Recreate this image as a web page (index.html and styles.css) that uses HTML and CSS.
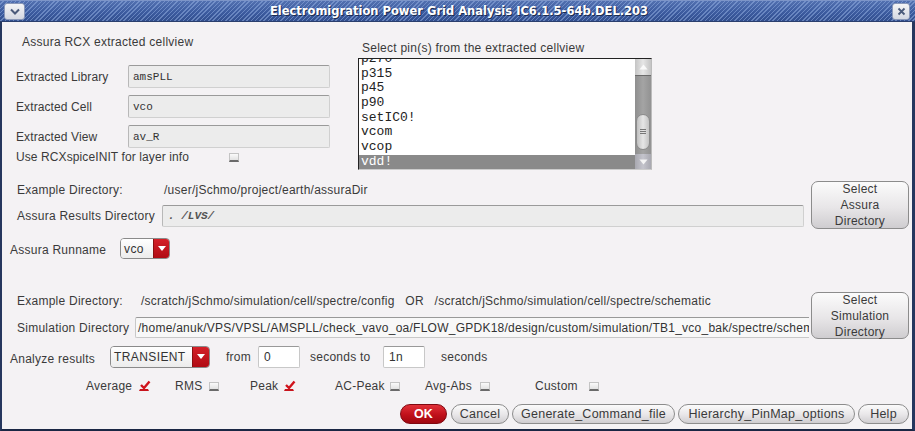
FILE: index.html
```html
<!DOCTYPE html>
<html>
<head>
<meta charset="utf-8">
<link rel="stylesheet" href="styles.css">
</head>
<body>
<div class="window">
  <div class="titlebar">
    <div class="tb-btn tb-menu"><svg width="12" height="8" viewBox="0 0 12 8"><path d="M2 1.5 L6 5.5 L10 1.5" fill="none" stroke="#4a5a7a" stroke-width="2"/></svg></div>
    <div class="tb-title">Electromigration Power Grid Analysis IC6.1.5-64b.DEL.203</div>
    <div class="tb-btn tb-close"><svg width="9" height="9" viewBox="0 0 9 9"><path d="M1.5 1.5 L7.5 7.5 M7.5 1.5 L1.5 7.5" stroke="#4a5a7a" stroke-width="1.8"/></svg></div>
  </div>
  <div class="frame">
    <div class="top">
      <div class="cellview">
        <div class="section-title">Assura RCX extracted cellview</div>
        <div class="fields">
          <div class="field"><span class="flabel">Extracted Library</span><div class="input mono">amsPLL</div></div>
          <div class="field"><span class="flabel">Extracted Cell</span><div class="input mono">vco</div></div>
          <div class="field"><span class="flabel">Extracted View</span><div class="input mono">av_R</div></div>
        </div>
        <div class="checkline"><span class="check-label">Use RCXspiceINIT for layer info</span><span class="cb"></span></div>
      </div>
      <div class="pins">
        <div class="pins-title">Select pin(s) from the extracted cellview</div>
        <div class="listbox">
          <div class="items-clip">
            <ul class="items">
              <li>p270</li>
              <li>p315</li>
              <li>p45</li>
              <li>p90</li>
              <li>setIC0!</li>
              <li>vcom</li>
              <li>vcop</li>
              <li class="sel">vdd!</li>
            </ul>
          </div>
          <div class="scrollbar">
            <div class="sb-up"><svg width="9" height="6" viewBox="0 0 9 6"><path d="M0.5 5.5 L4.5 0.5 L8.5 5.5 Z" fill="#fafafa"/></svg></div>
            <div class="sb-track"><div class="sb-thumb"><span class="grip"></span></div></div>
            <div class="sb-down"><svg width="9" height="6" viewBox="0 0 9 6"><path d="M0.5 0.5 L4.5 5.5 L8.5 0.5 Z" fill="#f4f4f4"/></svg></div>
          </div>
        </div>
      </div>
    </div>

    <div class="dir-section assura">
      <div class="dir-left">
        <div class="ex-row"><span class="ex-label">Example Directory:</span><span class="ex-value">/user/jSchmo/project/earth/assuraDir</span></div>
        <div class="dir-row"><span class="dir-label">Assura Results Directory</span><div class="input wide mono lvs">. /LVS/</div></div>
      </div>
      <div class="btn big">Select<br>Assura<br>Directory</div>
    </div>

    <div class="runname-row">
      <span class="run-label">Assura Runname</span>
      <div class="combo small"><span class="combo-text">vco</span><span class="combo-arrow"><svg width="8" height="5" viewBox="0 0 8 5"><path d="M0 0 L8 0 L4 5 Z" fill="#fff"/></svg></span></div>
    </div>

    <div class="dir-section sim">
      <div class="dir-left">
        <div class="ex-row"><span class="ex-label">Example Directory:</span><span class="ex-value">/scratch/jSchmo/simulation/cell/spectre/config&nbsp;&nbsp;&nbsp;OR&nbsp;&nbsp;&nbsp;/scratch/jSchmo/simulation/cell/spectre/schematic</span></div>
        <div class="dir-row"><span class="dir-label">Simulation Directory</span><div class="input wide simpath">/home/anuk/VPS/VPSL/AMSPLL/check_vavo_oa/FLOW_GPDK18/design/custom/simulation/TB1_vco_bak/spectre/schematic</div></div>
      </div>
      <div class="btn big">Select<br>Simulation<br>Directory</div>
    </div>

    <div class="analyze-row">
      <span class="an-label">Analyze results</span>
      <div class="combo large"><span class="combo-text">TRANSIENT</span><span class="combo-arrow"><svg width="8" height="5" viewBox="0 0 8 5"><path d="M0 0 L8 0 L4 5 Z" fill="#fff"/></svg></span></div>
      <span class="an-from">from</span>
      <div class="input num">0</div>
      <span class="an-to">seconds to</span>
      <div class="input num">1n</div>
      <span class="an-sec">seconds</span>
    </div>

    <div class="opts-row">
      <span class="opt o-avg"><span class="opt-label">Average</span><span class="cb on"><svg width="12" height="10" viewBox="0 0 12 10"><path d="M2 5 L5 8 L10.5 1.5" fill="none" stroke="#d0141c" stroke-width="2.4"/></svg></span></span>
      <span class="opt o-rms"><span class="opt-label">RMS</span><span class="cb"></span></span>
      <span class="opt o-peak"><span class="opt-label">Peak</span><span class="cb on"><svg width="12" height="10" viewBox="0 0 12 10"><path d="M2 5 L5 8 L10.5 1.5" fill="none" stroke="#d0141c" stroke-width="2.4"/></svg></span></span>
      <span class="opt o-ac"><span class="opt-label">AC-Peak</span><span class="cb"></span></span>
      <span class="opt o-abs"><span class="opt-label">Avg-Abs</span><span class="cb"></span></span>
      <span class="opt o-cus"><span class="opt-label">Custom</span><span class="cb"></span></span>
    </div>

    <div class="buttons-row">
      <div class="btn pill ok">OK</div>
      <div class="btn pill b-cancel">Cancel</div>
      <div class="btn pill b-gen">Generate_Command_file</div>
      <div class="btn pill b-hier">Hierarchy_PinMap_options</div>
      <div class="btn pill b-help">Help</div>
    </div>
  </div>
</div>
</body>
</html>
```

FILE: styles.css
```css
* { box-sizing: border-box; }
html, body { margin: 0; padding: 0; }
body {
  width: 915px;
  height: 431px;
  overflow: hidden;
  font-family: "Liberation Sans", Arial, sans-serif;
  font-size: 12px;
  letter-spacing: 0.25px;
  color: #3a3a3a;
  background: #f4f2f4;
}
.window { width: 915px; height: 431px; display: flex; flex-direction: column; }

.titlebar {
  height: 22px;
  flex: none;
  display: flex;
  align-items: center;
  position: relative;
  background:
    repeating-linear-gradient(135deg, rgba(255,255,255,0.0) 0px, rgba(255,255,255,0.0) 2px, rgba(150,178,228,0.5) 2px, rgba(150,178,228,0.5) 3px),
    linear-gradient(#5270b0, #3b5a9e 60%, #33508f);
  border-bottom: 1px solid #2a3f6e;
  border-top: 1px solid #7d95c8;
}
.tb-btn {
  position: absolute;
  top: 2px;
  width: 21px;
  height: 17px;
  border: 1px solid #8a98b8;
  border-radius: 3px;
  background: linear-gradient(#f4f4f6, #d4d8e2);
  display: flex;
  align-items: center;
  justify-content: center;
}
.tb-menu { left: 4px; }
.tb-close { right: 5px; width: 18px; }
.tb-title {
  flex: 1;
  text-align: center;
  color: #fff;
  font-family: "DejaVu Sans", sans-serif;
  font-weight: bold;
  font-size: 11.5px;
  letter-spacing: 0;
  text-shadow: 1px 1px 0 #1c2c50;
  padding-left: 3px;
}

.frame {
  flex: 1;
  border-left: 2px solid #26375e;
  border-right: 3px solid #26375e;
  border-bottom: 2px solid #1a2744;
  background: #f4f2f4;
  display: flex;
  flex-direction: column;
}

.mono { font-family: "Liberation Mono", "Courier New", monospace; font-size: 11px; color: #333; letter-spacing: 0; }

.input {
  background: #ececec;
  border: 1px solid #d0d0d0;
  border-top-color: #9a9a9a;
  border-left-color: #b8b8b8;
  border-radius: 2px;
  display: flex;
  align-items: center;
  padding-left: 4px;
  white-space: nowrap;
  overflow: hidden;
}

.top { display: flex; padding-left: 14px; }
.cellview { width: 342px; }
.section-title { margin-top: 13px; margin-left: 6px; line-height: 14px; }
.fields { margin-top: 16px; display: flex; flex-direction: column; gap: 7px; }
.field { display: flex; align-items: center; height: 23px; }
.flabel { width: 112px; letter-spacing: 0.1px; }
.field .input { width: 202px; height: 23px; }
.checkline { margin-top: 2px; height: 14px; display: flex; align-items: center; }
.check-label { width: 213px; letter-spacing: 0.1px; }

.cb {
  display: inline-block;
  flex: none;
  width: 10px;
  height: 9px;
  background: linear-gradient(#fafafa, #e2e2e2);
  border: 1px solid #c4c4c4;
  border-bottom: 2px solid #6a6a6a;
  position: relative;
}
.cb.on { background: transparent; border-color: transparent; border-bottom: 2px solid #c8141c; }
.cb.on svg { position: absolute; left: -1px; top: -3px; }

.pins { width: 294px; }
.pins-title { margin-top: 19px; margin-left: 4px; line-height: 14px; }
.listbox {
  margin-top: 3px;
  height: 112px;
  border: 1px solid #222;
  border-right-color: #bbb;
  border-bottom-color: #ccc;
  background: #fff;
  display: flex;
}
.items-clip { flex: 1; overflow: hidden; }
.items {
  list-style: none;
  margin: -7px 0 0 0;
  padding: 0;
  font-family: "Liberation Mono", "Courier New", monospace;
  font-size: 13px;
  letter-spacing: 0;
  color: #222;
}
.items li { height: 14.7px; line-height: 14.7px; padding-left: 2px; }
.items li.sel { background: #8a8a8a; color: #fff; }
.scrollbar { width: 16px; flex: none; display: flex; flex-direction: column; background: linear-gradient(90deg, #8e8e8e, #a4a4a4 50%, #929292); }
.sb-up { height: 17px; background: linear-gradient(90deg, #c4c4c4, #e6e6e6 50%, #c4c4c4); border-bottom: 1px solid #6a6a6a; display: flex; align-items: center; justify-content: center; }
.sb-track { flex: 1; position: relative; }
.sb-thumb {
  position: absolute;
  left: 1px; right: 1px;
  top: 38px; height: 36px;
  border-radius: 7px;
  background: linear-gradient(90deg, #c0c0c0, #e6e6e6 50%, #c4c4c4);
  border: 1px solid #8c8c8c;
  display: flex;
  align-items: center;
  justify-content: center;
}
.grip { width: 6px; height: 6px; background: repeating-linear-gradient(#777 0 1px, transparent 1px 2px); }
.sb-down { height: 15px; background: linear-gradient(90deg, #a8a8b0, #c4c4cc 50%, #a8a8b0); display: flex; align-items: center; justify-content: center; }

.dir-section { display: flex; padding-left: 15px; }
.assura { margin-top: 11px; }
.sim { margin-top: 33px; }
.dir-left { flex: 1; min-width: 0; display: flex; flex-direction: column; }
.ex-row { height: 18px; display: flex; align-items: center; white-space: nowrap; }
.assura .ex-label { width: 147px; }
.sim .ex-label { width: 124px; }
.dir-row { display: flex; align-items: center; min-width: 0; }
.assura .dir-row { margin-top: 6px; height: 22px; }
.sim .dir-row { margin-top: 7px; height: 21px; }
.dir-label { flex: none; }
.assura .dir-label { width: 145px; }
.sim .dir-label { width: 118px; }
.input.wide { flex: 1; min-width: 0; height: 100%; }
.assura .dir-left { margin-right: 7px; }
.sim .dir-left { margin-right: 2px; }
.lvs { font-weight: bold; font-style: italic; color: #555; padding-left: 5px; }
.simpath { font-size: 12px; color: #333; padding-left: 2px; background: #f8f8f8; border-color: #c8c8c8; border-top-color: #999; border-right: none; border-radius: 2px 0 0 2px; }

.btn {
  border: 1px solid #8c8c8c;
  background: linear-gradient(#fbfbfb, #e8e6e8 55%, #cfcdd0);
  color: #3a3a3a;
  text-align: center;
  display: flex;
  align-items: center;
  justify-content: center;
  white-space: nowrap;
  flex: none;
}
.btn.big {
  width: 98px;
  border-radius: 7px;
  line-height: 16px;
  flex-direction: column;
  margin-right: 3px;
}
.assura .btn.big { height: 48px; }
.sim .btn.big { height: 47px; }

.runname-row { margin-top: 9px; height: 21px; display: flex; align-items: center; padding-left: 8px; }
.run-label { width: 110px; padding-top: 2px; }

.combo { display: flex; height: 21px; border-radius: 4px; overflow: hidden; border: 1px solid #8a8a8a; }
.combo.small { width: 50px; }
.combo.large { width: 100px; height: 22px; }
.combo-text { flex: 1; background: linear-gradient(#ffffff, #ececec); padding-left: 3px; display: flex; align-items: center; font-size: 12px; color: #333; letter-spacing: 0.4px; }
.combo-arrow { width: 16px; background: linear-gradient(#d42028, #b00c14); display: flex; align-items: center; justify-content: center; border-left: 1px solid #8a1010; }
.combo.large .combo-arrow { width: 17px; }

.analyze-row { margin-top: 6px; height: 23px; display: flex; align-items: center; padding-left: 8px; white-space: nowrap; }
.an-label { width: 100px; padding-top: 4px; }
.an-from { margin-left: 16px; width: 32px; }
.input.num { width: 42px; height: 22px; background: #fff; font-size: 12px; color: #333; padding-left: 5px; border-color: #c8c8c8; border-top-color: #999; }
.an-to { margin-left: 10px; width: 73px; }
.an-sec { margin-left: 16px; }

.opts-row { margin-top: 11px; height: 14px; display: flex; align-items: center; white-space: nowrap; padding-left: 84px; }
.opt { display: flex; align-items: center; flex: none; }
.o-avg { width: 89px; }
.o-avg .opt-label { width: 53px; }
.o-rms { width: 75px; }
.o-rms .opt-label { width: 34px; }
.o-peak { width: 85px; }
.o-peak .opt-label { width: 34px; }
.o-ac { width: 90px; }
.o-ac .opt-label { width: 55px; }
.o-abs { width: 110px; }
.o-abs .opt-label { width: 55px; }
.o-cus .opt-label { width: 54px; }

.buttons-row { margin-top: 11px; display: flex; justify-content: flex-end; gap: 3px; padding-right: 3px; }
.btn.pill { height: 20px; border-radius: 10px; font-size: 12.5px; }
.btn.ok { width: 47px; background: linear-gradient(#e03038, #c0101a 55%, #a00810); border-color: #800810; color: #fff; font-weight: bold; margin-right: 1px; }
.b-cancel { width: 58px; }
.b-gen { width: 163px; }
.b-hier { width: 177px; }
.b-help { width: 51px; }
```
